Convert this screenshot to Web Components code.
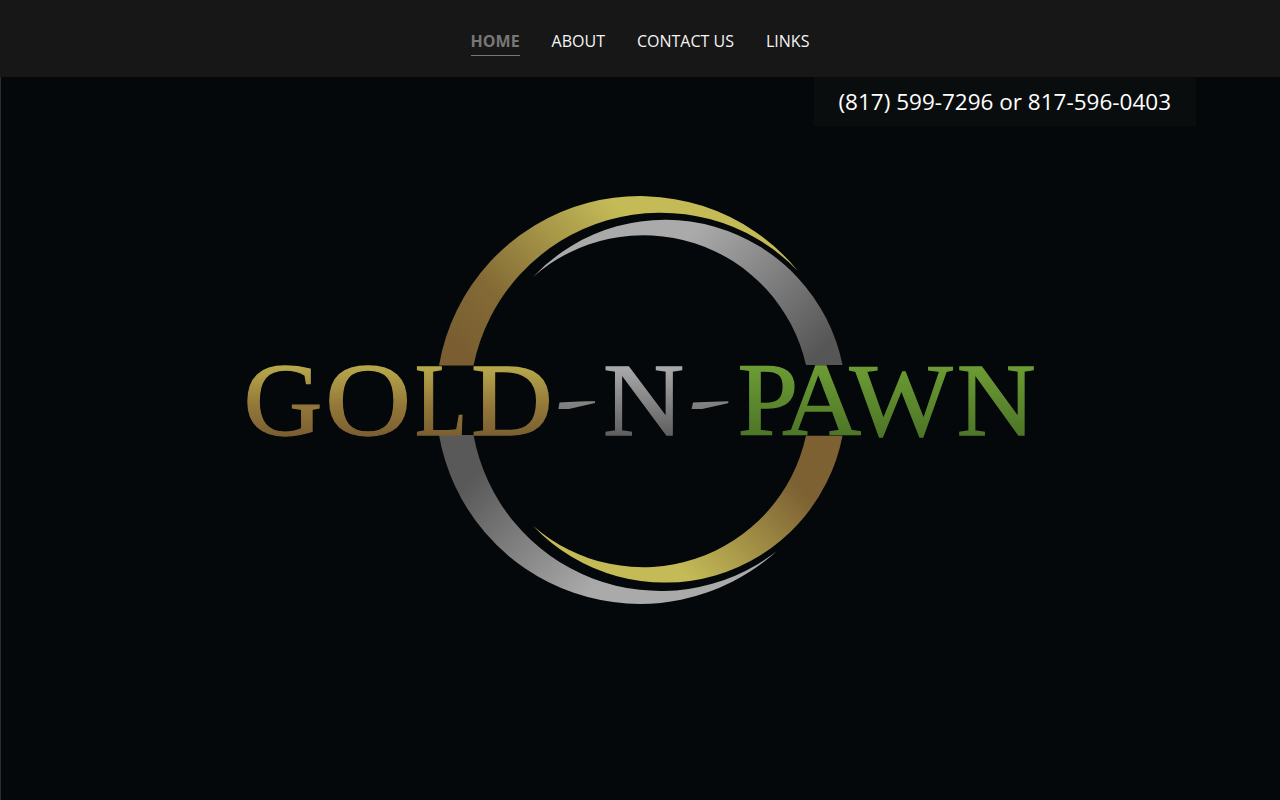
<!DOCTYPE html>
<html lang="en">
<head>
<meta charset="utf-8">
<title>Gold-N-Pawn</title>
<style>
  html, body { margin: 0; height: 100%; background: #05080a; }
  body { overflow: hidden; font-family: "Open Sans", "Liberation Sans", sans-serif; }
</style>
</head>
<body>
<gold-page>
  <site-nav>
    <nav-link active>HOME</nav-link>
    <nav-link>ABOUT</nav-link>
    <nav-link>CONTACT US</nav-link>
    <nav-link>LINKS</nav-link>
  </site-nav>
  <phone-banner>(817) 599-7296 or 817-596-0403</phone-banner>
  <logo-mark></logo-mark>
</gold-page>

<script>
class GoldPage extends HTMLElement {
  constructor() {
    super();
    this.attachShadow({ mode: 'open' });
    this.shadowRoot.innerHTML = `
      <style>
        :host { display: flex; flex-direction: column; height: 800px; background: #05080a; }
        #hero {
          flex: 1;
          display: flex;
          flex-direction: column;
          border-left: 1px solid #2b2c2d;
        }
      </style>
      <slot name="top"></slot>
      <div id="hero"><slot></slot></div>
    `;
  }

  connectedCallback() {
    // nav sits above the hero, everything else goes in it
    const nav = this.querySelector('site-nav');
    if (nav) nav.slot = 'top';
  }
}

class SiteNav extends HTMLElement {
  constructor() {
    super();
    this.attachShadow({ mode: 'open' });
    this.shadowRoot.innerHTML = `
      <style>
        :host {
          display: flex;
          justify-content: center;
          align-items: flex-start;
          gap: 32px;
          height: 77px;
          box-sizing: border-box;
          padding-top: 29px;
          background: #171717;
        }
      </style>
      <slot></slot>
    `;
  }
}

class NavLink extends HTMLElement {
  constructor() {
    super();
    this.attachShadow({ mode: 'open' });
    this.shadowRoot.innerHTML = `
      <style>
        :host {
          display: block;
          height: 27px;
          box-sizing: border-box;
          font: 400 16px/24px "Open Sans", "Liberation Sans", sans-serif;
          color: #f5f5f5;
          cursor: pointer;
        }
        :host([active]) {
          font-weight: 700;
          color: #777777;
          border-bottom: 1px solid #777777;
        }
      </style>
      <slot></slot>
    `;
  }
}

class PhoneBanner extends HTMLElement {
  constructor() {
    super();
    this.attachShadow({ mode: 'open' });
    this.shadowRoot.innerHTML = `
      <style>
        :host {
          display: block;
          align-self: flex-end;
          margin-right: 84px;
          height: 49px;
          box-sizing: border-box;
          padding: 9px 25px 0 24px;
          background: #0a0d0e;
          font: 400 22.5px/32px "Open Sans", "Liberation Sans", sans-serif;
          color: #ffffff;
        }
      </style>
      <slot></slot>
    `;
  }
}

// [char, x origin, horizontal scale], fitted to the lettering in the reference
const GOLD_LETTERS = [
  ['G', 242.5, 1.05],
  ['O', 324, 1.147],
  ['L', 414, 0.82],
  ['D', 470, 1.09],
];

class LogoMark extends HTMLElement {
  constructor() {
    super();
    this.attachShadow({ mode: 'open' });
    const gold = GOLD_LETTERS.map(([ch, x, sx]) =>
      `<text class="fat" transform="translate(${x} 0) scale(${sx} 1)" y="435" fill="url(#goldText)" stroke="url(#goldText)">${ch}</text>`
    ).join('');
    // arcs are fitted circles; viewBox is page coordinates so numbers read off the screenshot
    this.shadowRoot.innerHTML = `
      <style>
        :host { display: block; margin: 64px auto 0; width: 820px; height: 420px; }
        svg { display: block; }
        text { font-family: "Liberation Serif", "Times New Roman", serif; font-size: 104px; }
        .fat { stroke-width: 1.3; }
      </style>
      <svg width="820" height="420" viewBox="230 190 820 420" role="img" aria-label="GOLD-N-PAWN">
        <defs>
          <linearGradient id="goldTop" gradientUnits="userSpaceOnUse" x1="455" y1="345" x2="610" y2="200">
            <stop offset="0" stop-color="#7a5e32"/>
            <stop offset=".3" stop-color="#836a35"/>
            <stop offset="1" stop-color="#c4bb57"/>
          </linearGradient>
          <linearGradient id="silverTop" gradientUnits="userSpaceOnUse" x1="700" y1="225" x2="825" y2="345">
            <stop offset="0" stop-color="#aaaaaa"/>
            <stop offset="1" stop-color="#575656"/>
          </linearGradient>
          <linearGradient id="goldBottom" gradientUnits="userSpaceOnUse" x1="790" y1="480" x2="690" y2="580">
            <stop offset="0" stop-color="#7d6133"/>
            <stop offset="1" stop-color="#c4bb57"/>
          </linearGradient>
          <linearGradient id="silverBottom" gradientUnits="userSpaceOnUse" x1="470" y1="480" x2="590" y2="590">
            <stop offset="0" stop-color="#5a5959"/>
            <stop offset="1" stop-color="#aaaaaa"/>
          </linearGradient>
          <linearGradient id="goldText" gradientUnits="userSpaceOnUse" x1="0" y1="366" x2="0" y2="436">
            <stop offset="0" stop-color="#b8a94c"/>
            <stop offset=".55" stop-color="#94793a"/>
            <stop offset="1" stop-color="#7a5e31"/>
          </linearGradient>
          <linearGradient id="silverText" gradientUnits="userSpaceOnUse" x1="0" y1="366" x2="0" y2="436">
            <stop offset="0" stop-color="#ababab"/>
            <stop offset="1" stop-color="#5e5e5e"/>
          </linearGradient>
          <linearGradient id="greenText" gradientUnits="userSpaceOnUse" x1="0" y1="366" x2="0" y2="436">
            <stop offset="0" stop-color="#6c9c34"/>
            <stop offset="1" stop-color="#4d7527"/>
          </linearGradient>
          <clipPath id="dashLeft"><polygon points="557,411.5 558.5,402.5 594,400.5 594,403"/></clipPath>
          <clipPath id="dashRight"><polygon points="690,411.5 692,402.5 728,401 728,403"/></clipPath>
        </defs>

        <path fill="url(#goldTop)" d="M797 270.500 A204 204 0 0 0 438 365 L472.500 365 A191 191 0 0 1 797 270.500 Z" transform="translate(0 .5)"/>
        <path fill="url(#silverTop)" d="M532 277 A181 181 0 0 1 841.500 365 L805 365 A166.700 166.700 0 0 0 532 277 Z"/>
        <path fill="url(#goldBottom)" d="M532 525 A181 181 0 0 0 841.500 435 L805 435 A166.700 166.700 0 0 1 532 525 Z" transform="translate(0 .7)"/>
        <path fill="url(#silverBottom)" d="M776 551 A204 204 0 0 1 438 435 L472.500 435 A190 190 0 0 0 776 551 Z"/>

        ${gold}
        <g clip-path="url(#dashLeft)">
          <text transform="translate(548 0) scale(1.5 1)" y="430" fill="url(#silverText)">-</text>
        </g>
        <text class="fat" transform="translate(602 0) scale(1.08 1)" y="435" fill="url(#silverText)" stroke="url(#silverText)">N</text>
        <g clip-path="url(#dashRight)">
          <text transform="translate(681 0) scale(1.5 1)" y="430" fill="url(#silverText)">-</text>
        </g>
        <text class="fat" transform="scale(1.05 1)" y="435" x="701.4 744.1 808.1 910.2" fill="url(#greenText)" stroke="url(#greenText)">PAWN</text>
      </svg>
    `;
  }
}

customElements.define('gold-page', GoldPage);
customElements.define('site-nav', SiteNav);
customElements.define('nav-link', NavLink);
customElements.define('phone-banner', PhoneBanner);
customElements.define('logo-mark', LogoMark);
</script>
</body>
</html>
